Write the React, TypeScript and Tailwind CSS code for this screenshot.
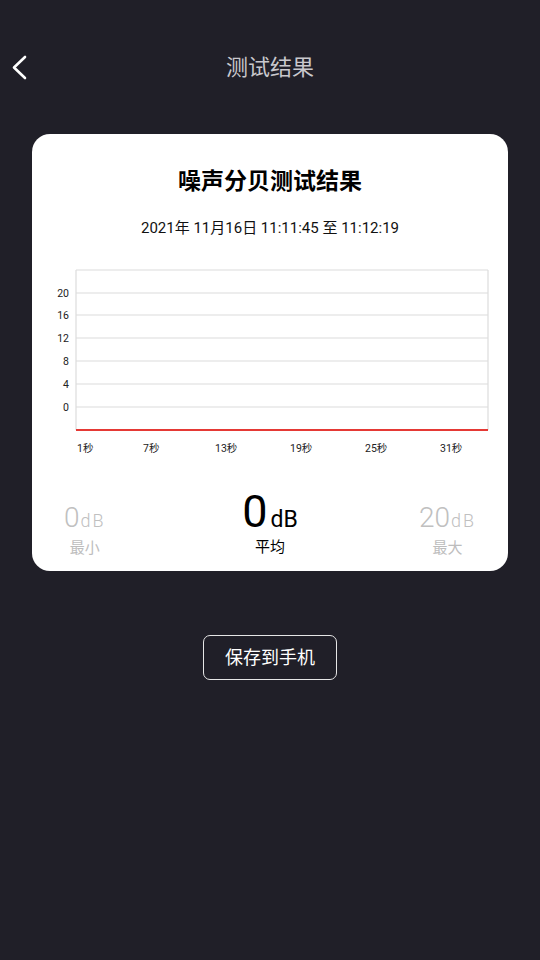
import React from 'react';

const yTicks = [
  { label: '20', y: 31 },
  { label: '16', y: 53 },
  { label: '12', y: 76 },
  { label: '8', y: 99 },
  { label: '4', y: 122 },
  { label: '0', y: 145 },
];

const xTicks = [
  { label: '1秒', x: 45 },
  { label: '7秒', x: 111 },
  { label: '13秒', x: 183 },
  { label: '19秒', x: 258 },
  { label: '25秒', x: 333 },
  { label: '31秒', x: 408 },
];

function Chart() {
  return (
    <svg width="476" height="196" viewBox="0 0 476 196" className="block">
      {/* frame */}
      <line x1="44" y1="8" x2="456" y2="8" stroke="#dcdcdc" strokeWidth="1.2" />
      <line x1="44" y1="8" x2="44" y2="168" stroke="#dcdcdc" strokeWidth="1.2" />
      <line x1="456" y1="8" x2="456" y2="168" stroke="#dcdcdc" strokeWidth="1.2" />
      {yTicks.map((t) => (
        <g key={t.label}>
          <line x1="44" y1={t.y} x2="456" y2={t.y} stroke="#dcdcdc" strokeWidth="1.2" />
          <text
            x="37"
            y={t.y + 3.5}
            textAnchor="end"
            fontSize="10.5"
            fill="#222"
            fontFamily="Roboto, 'Noto Sans CJK SC', sans-serif"
          >
            {t.label}
          </text>
        </g>
      ))}
      <line x1="44" y1="168" x2="456" y2="168" stroke="#e53935" strokeWidth="2" />
      {xTicks.map((t) => (
        <text
          key={t.label}
          x={t.x}
          y="190"
          fontSize="10.5"
          fill="#222"
          fontFamily="Roboto, 'Noto Sans CJK SC', sans-serif"
        >
          {t.label}
        </text>
      ))}
    </svg>
  );
}

export default function App() {
  return (
    <div
      className="min-h-screen w-[540px] bg-[#201f28] flex flex-col"
      style={{ fontFamily: "Roboto, 'Noto Sans CJK SC', sans-serif" }}
    >
      {/* Header */}
      <div className="relative mt-[48px] h-[40px] flex items-center justify-center">
        <svg
          className="absolute left-[10px] top-[7px]"
          width="20"
          height="26"
          viewBox="0 0 20 26"
          fill="none"
        >
          <path d="M15 2 L4 12.5 L15 23" stroke="#ffffff" strokeWidth="2.6" strokeLinecap="round" strokeLinejoin="round" />
        </svg>
        <h1 className="text-[22px] leading-none text-[#c9c8cd]">测试结果</h1>
      </div>

      {/* Result card */}
      <div className="mx-8 mt-[46px] bg-white rounded-[18px] pt-[36px] pb-[15px] flex flex-col items-center">
        <h2 className="text-[23px] leading-[23px] font-bold text-black">噪声分贝测试结果</h2>
        <p className="mt-[27px] text-[15px] leading-[16px] text-[#111]">2021年 11月16日 11:11:45 至 11:12:19</p>
        <div className="mt-[26px] self-stretch">
          <Chart />
        </div>

        <div className="mt-[31px] self-stretch grid grid-cols-3 items-baseline px-8">
          <div className="justify-self-start flex flex-col items-center">
            <div className="flex items-baseline text-[#c0c0c0] font-light">
              <span className="text-[28px] leading-none">0</span>
              <span className="text-[18px] leading-none tracking-[2px] ml-[1px]">dB</span>
            </div>
            <span className="mt-[9px] text-[15px] leading-[15px] text-[#bdbdbd]">最小</span>
          </div>
          <div className="justify-self-center flex flex-col items-center">
            <div className="flex items-baseline text-black">
              <span className="text-[45px] leading-none">0</span>
              <span className="text-[23px] leading-none ml-[3px]">dB</span>
            </div>
            <span className="mt-[6px] text-[15px] leading-[15px] text-black">平均</span>
          </div>
          <div className="justify-self-end flex flex-col items-center">
            <div className="flex items-baseline text-[#c0c0c0] font-light">
              <span className="text-[28px] leading-none">20</span>
              <span className="text-[18px] leading-none tracking-[2px] ml-[1px]">dB</span>
            </div>
            <span className="mt-[9px] text-[15px] leading-[15px] text-[#bdbdbd]">最大</span>
          </div>
        </div>
      </div>

      {/* Save button */}
      <div className="mt-[64px] flex justify-center">
        <button className="w-[134px] h-[45px] border border-[#e6e6e6] rounded-[7px] text-white text-[18px] leading-none">
          保存到手机
        </button>
      </div>
    </div>
  );
}
